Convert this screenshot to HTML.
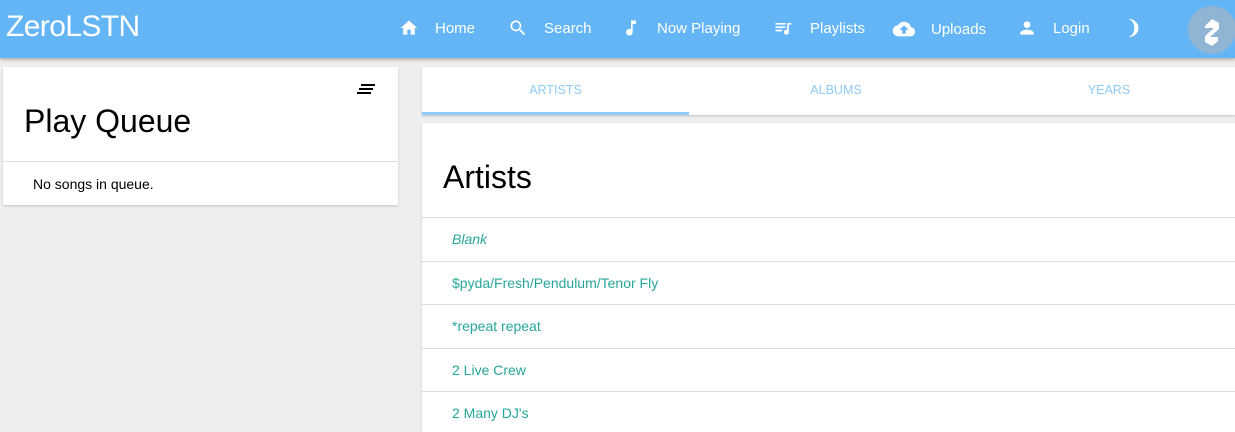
<!DOCTYPE html>
<html><head><meta charset="utf-8"><style>
*{margin:0;padding:0;box-sizing:border-box}
html,body{width:1235px;height:432px;max-height:432px;overflow:hidden}
body{background:#eee;font-family:"Liberation Sans",sans-serif;position:relative}
.nav{position:absolute;left:0;top:0;width:1235px;height:58px;background:#64b5f6;box-shadow:0 2px 3px rgba(0,0,0,.25);z-index:2}
.logo{position:absolute;left:6px;top:10px;color:#fff;font-size:30px;letter-spacing:-0.6px}
.ni{position:absolute;top:18px;color:#fff;font-size:15px;display:flex;align-items:center}
.ni svg{margin-right:16px}
.card{position:absolute;background:#fff;box-shadow:0 1px 2px rgba(0,0,0,.18)}
.row{height:43.5px;border-top:1px solid #ddd;padding-left:30px;color:#26a69a;font-size:14px;line-height:43px}
</style></head><body>
<div class="nav">
<div class="logo">ZeroLSTN</div>
<div class="ni" style="left:399px"><svg width="20" height="20" viewBox="0 0 24 24"><path fill="#fff" d="M10 20v-6h4v6h5v-8h3L12 3 2 12h3v8z"/></svg>Home</div>
<div class="ni" style="left:508px"><svg width="20" height="20" viewBox="0 0 24 24"><path fill="#fff" d="M15.5 14h-.8l-.3-.3A6.5 6.5 0 1 0 9.5 16a6.5 6.5 0 0 0 4.2-1.6l.3.3v.8l5 5 1.5-1.5-5-5zm-6 0a4.5 4.5 0 1 1 0-9 4.5 4.5 0 0 1 0 9z"/></svg>Search</div>
<div class="ni" style="left:621px"><svg width="20" height="20" viewBox="0 0 24 24"><path fill="#fff" d="M12 3v10.6A4 4 0 1 0 14 17V7h4V3z"/></svg>Now Playing</div>
<div class="ni" style="left:772px"><svg width="22" height="20" viewBox="0 0 24 24"><path fill="#fff" d="M15 6H3v2h12V6zm0 4H3v2h12v-2zM3 16h8v-2H3v2zM17 6v8.2A3 3 0 1 0 19 17V8h3V6h-5z"/></svg>Playlists</div>
<div class="ni" style="left:891px"><svg width="26" height="22" viewBox="0 0 24 24" style="margin-right:14px"><path fill="#fff" d="M19.4 10A7.5 7.5 0 0 0 5.4 8 6 6 0 0 0 6 20h13a5 5 0 0 0 .4-10zM14 13v4h-4v-4H7l5-5 5 5h-3z"/></svg>Uploads</div>
<div class="ni" style="left:1017px"><svg width="20" height="20" viewBox="0 0 24 24"><path fill="#fff" d="M12 12a4 4 0 1 0 0-8 4 4 0 0 0 0 8zm0 2c-2.7 0-8 1.3-8 4v2h16v-2c0-2.7-5.3-4-8-4z"/></svg>Login</div>
<div class="ni" style="left:1122px;top:17px"><svg width="22" height="22" viewBox="0 0 24 24"><path fill="#fff" d="M7 2c4 1.5 6.5 5.5 6.5 10S11 20.5 7 22c6 0 11-4.5 11-10S13 2 7 2z"/></svg></div>
<div style="position:absolute;left:1188px;top:6px;width:48px;height:48px;border-radius:50%;background:#90b4d4"><svg width="48" height="48" viewBox="0 0 48 48"><path fill="#fff" d="M17 20l7-7 7 4v6l-9 8h8v4l-6 5-7-4v-6l9-8h-9z"/></svg></div>
</div>
<div class="card" style="left:3px;top:67px;width:395px;height:138px">
<svg style="position:absolute;left:354px;top:16px" width="20" height="12" viewBox="0 0 20 12"><rect x="4" y="1" width="14" height="2"/><rect x="2" y="5" width="14" height="2"/><rect x="0" y="9" width="14" height="2"/></svg>
<div style="position:absolute;left:21px;top:36px;font-size:32px;color:#000">Play Queue</div>
<div style="position:absolute;left:0;top:94px;width:100%;border-top:1px solid #ddd"></div>
<div style="position:absolute;left:30px;top:109px;font-size:14px;color:#000">No songs in queue.</div>
</div>
<div class="card" style="left:422px;top:67px;width:813px;height:48px">
<div style="position:absolute;left:0;top:16px;width:267px;text-align:center;color:#90caf9;font-size:12.5px">ARTISTS</div>
<div style="position:absolute;left:267px;top:16px;width:294px;text-align:center;color:#90caf9;font-size:12.5px">ALBUMS</div>
<div style="position:absolute;left:561px;top:16px;width:252px;text-align:center;color:#90caf9;font-size:12.5px">YEARS</div>
<div style="position:absolute;left:0;top:45px;width:267px;height:3px;background:#90caf9"></div>
</div>
<div class="card" style="left:422px;top:123px;width:813px;height:309px;overflow:hidden">
<div style="height:94px;padding:36px 0 0 21px;font-size:32px;color:#000">Artists</div>
<div class="row" style="font-style:italic">Blank</div>
<div class="row">$pyda/Fresh/Pendulum/Tenor Fly</div>
<div class="row">*repeat repeat</div>
<div class="row">2 Live Crew</div>
<div class="row">2 Many DJ's</div>
</div>
</body></html>
